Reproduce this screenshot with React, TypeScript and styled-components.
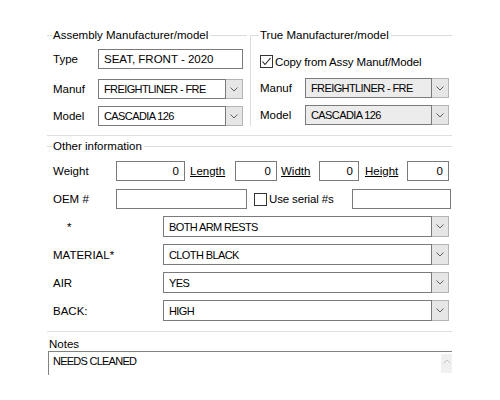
import React from 'react';
import styled, { createGlobalStyle } from 'styled-components';

const GlobalStyle = createGlobalStyle`
  html, body {
    margin: 0;
    padding: 0;
    background: #ffffff;
  }
  body {
    font-family: 'Liberation Sans', Arial, sans-serif;
    font-size: 11.5px;
    color: #000;
  }
`;

const Form = styled.div`
  width: 405px;
  margin-left: 47px;
  padding-top: 29px;
  overflow: hidden;
`;

const TopSection = styled.div`
  display: flex;
  border-bottom: 1px solid #e0e0e0;
  padding-bottom: 9px;
`;

const Group = styled.div<{ $width?: number }>`
  ${(p) => (p.$width ? `width: ${p.$width}px;` : 'flex: 1;')}
  display: flex;
  flex-direction: column;
`;

const GroupHeader = styled.div`
  display: flex;
  align-items: center;
  height: 13px;
`;

const HeaderLead = styled.div<{ $width: number; $edge?: boolean }>`
  width: ${(p) => p.$width}px;
  align-self: flex-end;
  height: 6px;
  border-top: 1px solid #dcdcdc;
  ${(p) => (p.$edge ? 'border-left: 1px solid #dcdcdc;' : '')}
`;

const HeaderText = styled.span`
  padding: 0 2px 0 1px;
  white-space: nowrap;
  line-height: 13px;
`;

const HeaderLine = styled.div<{ $gap?: number }>`
  flex: 1;
  border-top: 1px solid #dcdcdc;
  margin-right: ${(p) => p.$gap ?? 0}px;
`;

const GroupBody = styled.div<{ $edge?: boolean; $pad: number }>`
  padding-left: ${(p) => p.$pad}px;
  ${(p) => (p.$edge ? 'border-left: 1px solid #dcdcdc;' : '')}
  display: flex;
  flex-direction: column;
  flex: 1;
`;

const Row = styled.div<{ $top: number }>`
  display: flex;
  align-items: center;
  margin-top: ${(p) => p.$top}px;
`;

const Label = styled.span<{ $width: number; $indent?: number }>`
  width: ${(p) => p.$width}px;
  padding-left: ${(p) => p.$indent ?? 0}px;
  box-sizing: border-box;
  flex-shrink: 0;
  white-space: nowrap;
`;

const LinkLabel = styled(Label)`
  text-decoration: underline;
`;

const TextBox = styled.div<{ $width: number; $right?: boolean }>`
  width: ${(p) => p.$width}px;
  height: 20px;
  box-sizing: border-box;
  border: 1px solid #7a7a7a;
  background: #fff;
  display: flex;
  align-items: center;
  justify-content: ${(p) => (p.$right ? 'flex-end' : 'flex-start')};
  padding: 0 5px;
  flex-shrink: 0;
  white-space: nowrap;
`;

const ComboWrap = styled.div<{ $width: number; $height?: number }>`
  width: ${(p) => p.$width}px;
  height: ${(p) => p.$height ?? 20}px;
  display: flex;
  flex-shrink: 0;
`;

const ComboText = styled.div<{ $disabled?: boolean }>`
  flex: 1;
  box-sizing: border-box;
  border: 1px solid #7a7a7a;
  background: ${(p) => (p.$disabled ? '#ececec' : '#fff')};
  display: flex;
  align-items: center;
  padding-left: 5px;
  white-space: nowrap;
  overflow: hidden;
  font-size: 11px;
  letter-spacing: -0.6px;
`;

const ComboButton = styled.div`
  width: 17px;
  box-sizing: border-box;
  border: 1px solid #b4b4b4;
  border-left: none;
  background: #e6e6e6;
  display: flex;
  align-items: center;
  justify-content: center;
`;

const CheckBox = styled.div`
  width: 13px;
  height: 13px;
  box-sizing: border-box;
  border: 1px solid #333;
  background: #fff;
  flex-shrink: 0;
  display: flex;
  align-items: center;
  justify-content: center;
`;

const CheckLabel = styled.span<{ $width?: number }>`
  padding-left: 2px;
  white-space: nowrap;
  letter-spacing: -0.15px;
  ${(p) => (p.$width ? `width: ${p.$width}px; flex-shrink: 0;` : '')}
`;

const OtherSection = styled.div`
  margin-top: 4px;
  border-bottom: 1px solid #e0e0e0;
  padding-bottom: 10px;
`;

const NotesSection = styled.div`
  margin-top: 6px;
  padding-left: 1px;
`;

const NotesLabel = styled.div`
  height: 13px;
  line-height: 12px;
  padding-left: 1px;
`;

const NotesBox = styled.div`
  height: 23px;
  border-top: 1px solid #828282;
  border-left: 1px solid #828282;
  display: flex;
  justify-content: space-between;
`;

const NotesText = styled.div`
  padding: 3px 0 0 4px;
  font-size: 11px;
  letter-spacing: -0.75px;
`;

const ScrollUp = styled.div`
  width: 11px;
  margin-top: 2px;
  height: 19px;
  background: #f0f0f0;
  display: flex;
  justify-content: center;
  padding-top: 5px;
  box-sizing: border-box;
`;

const Chevron = ({ up, color = '#606060' }: { up?: boolean; color?: string }) => (
  <svg width="8" height="5" viewBox="0 0 8 5">
    <polyline
      points={up ? '0.5,4.5 4,1 7.5,4.5' : '0.5,0.5 4,4 7.5,0.5'}
      fill="none"
      stroke={color}
      strokeWidth="1"
    />
  </svg>
);

const Check = () => (
  <svg width="11" height="11" viewBox="0 0 11 11">
    <polyline points="1.5,5.5 4,8.5 9.5,2" fill="none" stroke="#222" strokeWidth="1.1" />
  </svg>
);

const Combo = ({ value, width, height, disabled }: { value: string; width: number; height?: number; disabled?: boolean }) => (
  <ComboWrap $width={width} $height={height}>
    <ComboText $disabled={disabled}>{value}</ComboText>
    <ComboButton>
      <Chevron />
    </ComboButton>
  </ComboWrap>
);

const attributes = [
  { label: '*', indent: 14, value: 'BOTH ARM RESTS' },
  { label: 'MATERIAL*', indent: 0, value: 'CLOTH BLACK' },
  { label: 'AIR', indent: 0, value: 'YES' },
  { label: 'BACK:', indent: 0, value: 'HIGH' },
];

export default function App() {
  return (
    <>
      <GlobalStyle />
      <Form>
        <TopSection>
          <Group $width={203}>
            <GroupHeader>
              <HeaderLead $width={5} />
              <HeaderText>Assembly Manufacturer/model</HeaderText>
              <HeaderLine $gap={3} />
            </GroupHeader>
            <GroupBody $pad={6}>
              <Row $top={7}>
                <Label $width={45}>Type</Label>
                <TextBox $width={145}>SEAT, FRONT - 2020</TextBox>
              </Row>
              <Row $top={10}>
                <Label $width={45}>Manuf</Label>
                <Combo value="FREIGHTLINER - FRE" width={145} />
              </Row>
              <Row $top={7}>
                <Label $width={45}>Model</Label>
                <Combo value="CASCADIA 126" width={145} />
              </Row>
            </GroupBody>
          </Group>
          <Group>
            <GroupHeader>
              <HeaderLead $width={8} $edge />
              <HeaderText>True Manufacturer/model</HeaderText>
              <HeaderLine />
            </GroupHeader>
            <GroupBody $edge $pad={9}>
              <Row $top={13}>
                <CheckBox>
                  <Check />
                </CheckBox>
                <CheckLabel>Copy from Assy Manuf/Model</CheckLabel>
              </Row>
              <Row $top={10}>
                <Label $width={45}>Manuf</Label>
                <Combo value="FREIGHTLINER - FRE" width={144} disabled />
              </Row>
              <Row $top={7}>
                <Label $width={45}>Model</Label>
                <Combo value="CASCADIA 126" width={144} disabled />
              </Row>
            </GroupBody>
          </Group>
        </TopSection>

        <OtherSection>
          <GroupHeader>
            <HeaderLead $width={5} />
            <HeaderText>Other information</HeaderText>
            <HeaderLine />
          </GroupHeader>
          <GroupBody $pad={6}>
            <Row $top={8}>
              <Label $width={63}>Weight</Label>
              <TextBox $width={69} $right>0</TextBox>
              <LinkLabel $width={50} $indent={5}>Length</LinkLabel>
              <TextBox $width={42} $right>0</TextBox>
              <LinkLabel $width={42} $indent={4}>Width</LinkLabel>
              <TextBox $width={40} $right>0</TextBox>
              <LinkLabel $width={48} $indent={6}>Height</LinkLabel>
              <TextBox $width={42} $right>0</TextBox>
            </Row>
            <Row $top={8}>
              <Label $width={63}>OEM #</Label>
              <TextBox $width={131} />
              <Label $width={7} />
              <CheckBox />
              <CheckLabel $width={83}>Use serial #s</CheckLabel>
              <TextBox $width={99} />
            </Row>
            {attributes.map((a) => (
              <Row $top={7} key={a.label}>
                <Label $width={110} $indent={a.indent}>{a.label}</Label>
                <Combo value={a.value} width={286} height={21} />
              </Row>
            ))}
          </GroupBody>
        </OtherSection>

        <NotesSection>
          <NotesLabel>Notes</NotesLabel>
          <NotesBox>
            <NotesText>NEEDS CLEANED</NotesText>
            <ScrollUp>
              <Chevron up color="#c4c4c4" />
            </ScrollUp>
          </NotesBox>
        </NotesSection>
      </Form>
    </>
  );
}
